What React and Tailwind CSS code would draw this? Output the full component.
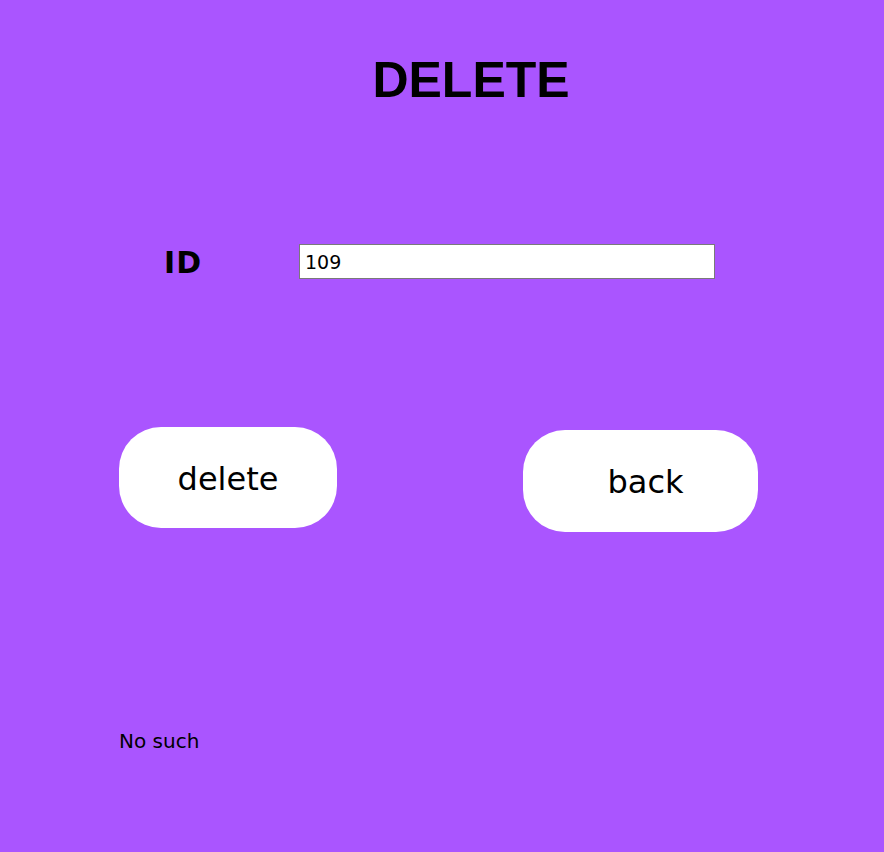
export default function App() {
  return (
    <div className="min-h-screen w-full bg-[#aa55ff] text-black flex flex-col" style={{ fontFamily: '"DejaVu Sans", Verdana, sans-serif' }}>
      <div className="flex justify-center pl-[58px] pt-[55px]">
        <h1 className="m-0 text-[50px] leading-none font-bold" style={{ fontFamily: '"Liberation Sans", Arial, sans-serif' }}>DELETE</h1>
      </div>
      <div className="flex items-center ml-[164px] mt-[139px]">
        <label className="w-[135px] text-[30px] font-bold leading-none pt-[3px] tracking-[1px]">ID</label>
        <input
          defaultValue="109"
          className="w-[416px] h-[35px] bg-white border border-[#7a7a7a] px-[5px] text-[19px] text-black outline-none"
          style={{ fontFamily: '"DejaVu Sans", Verdana, sans-serif' }}
        />
      </div>
      <div className="flex items-start mt-[148px]">
        <button className="ml-[119px] w-[218px] h-[101px] rounded-[42px] bg-white text-[32px] leading-none flex items-center justify-center pt-[2px]">
          delete
        </button>
        <button className="ml-[186px] mt-[3px] w-[235px] h-[102px] rounded-[42px] bg-white text-[32px] leading-none flex items-center justify-center pl-[10px] pt-[2px]">
          back
        </button>
      </div>
      <div className="ml-[119px] mt-[199px] text-[20px] leading-none">No such</div>
    </div>
  );
}
